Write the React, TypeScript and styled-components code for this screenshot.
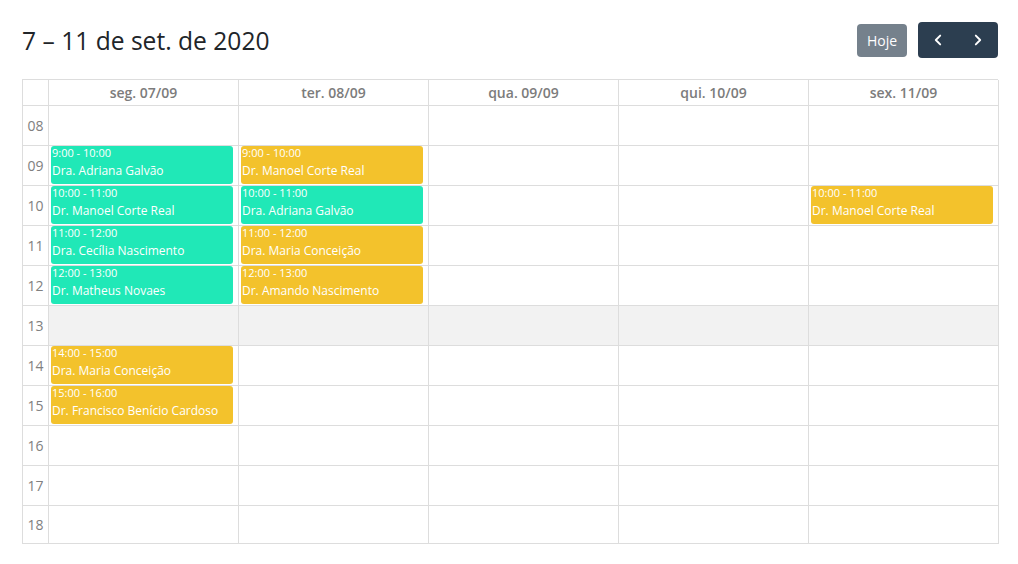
import styled, { createGlobalStyle } from "styled-components";

type Tone = "teal" | "gold";

type CalEvent = {
  day: number;
  hour: number;
  time: string;
  title: string;
  tone: Tone;
};

const days = ["seg. 07/09", "ter. 08/09", "qua. 09/09", "qui. 10/09", "sex. 11/09"];
const hours = [8, 9, 10, 11, 12, 13, 14, 15, 16, 17, 18];

const events: CalEvent[] = [
  { day: 0, hour: 9, time: "9:00 - 10:00", title: "Dra. Adriana Galvão", tone: "teal" },
  { day: 0, hour: 10, time: "10:00 - 11:00", title: "Dr. Manoel Corte Real", tone: "teal" },
  { day: 0, hour: 11, time: "11:00 - 12:00", title: "Dra. Cecília Nascimento", tone: "teal" },
  { day: 0, hour: 12, time: "12:00 - 13:00", title: "Dr. Matheus Novaes", tone: "teal" },
  { day: 0, hour: 14, time: "14:00 - 15:00", title: "Dra. Maria Conceição", tone: "gold" },
  { day: 0, hour: 15, time: "15:00 - 16:00", title: "Dr. Francisco Benício Cardoso", tone: "gold" },
  { day: 1, hour: 9, time: "9:00 - 10:00", title: "Dr. Manoel Corte Real", tone: "gold" },
  { day: 1, hour: 10, time: "10:00 - 11:00", title: "Dra. Adriana Galvão", tone: "teal" },
  { day: 1, hour: 11, time: "11:00 - 12:00", title: "Dra. Maria Conceição", tone: "gold" },
  { day: 1, hour: 12, time: "12:00 - 13:00", title: "Dr. Amando Nascimento", tone: "gold" },
  { day: 4, hour: 10, time: "10:00 - 11:00", title: "Dr. Manoel Corte Real", tone: "gold" },
];

const toneColors: Record<Tone, string> = {
  teal: "#20e8b7",
  gold: "#f3c22c",
};

const GlobalStyle = createGlobalStyle`
  html, body {
    margin: 0;
    padding: 0;
    background: #fff;
  }
  body {
    font-family: "Open Sans", "Noto Sans", sans-serif;
    color: #212529;
  }
`;

const Page = styled.div`
  padding: 22px 20px 0 22px;
`;

const Toolbar = styled.div`
  display: flex;
  align-items: center;
  justify-content: space-between;
  height: 36px;
  margin-bottom: 21px;
`;

const Title = styled.h2`
  margin: 0;
  font-size: 24.6px;
  font-weight: 400;
  color: #212529;
`;

const Actions = styled.div`
  display: flex;
  align-items: center;
  gap: 11px;
`;

const TodayButton = styled.button`
  height: 33px;
  width: 50px;
  border: none;
  border-radius: 4px;
  background: #2c3e50;
  opacity: 0.65;
  color: #fff;
  font-family: "Open Sans", sans-serif;
  font-size: 14px;
  padding: 0;
`;

const NavGroup = styled.div`
  display: flex;
  background: #2c3e50;
  border-radius: 4px;
  overflow: hidden;
`;

const NavButton = styled.button`
  width: 40px;
  height: 36px;
  border: none;
  background: transparent;
  color: #fff;
  display: flex;
  align-items: center;
  justify-content: center;
  padding: 0;
`;

const Grid = styled.div`
  display: grid;
  grid-template-columns: 26px repeat(5, 190px);
  border-top: 1px solid #ddd;
  border-left: 1px solid #ddd;
`;

const HeadCell = styled.div`
  height: 26px;
  box-sizing: border-box;
  border-right: 1px solid #ddd;
  border-bottom: 1px solid #ddd;
  display: flex;
  align-items: center;
  justify-content: center;
  font-size: 14px;
  font-weight: 600;
  color: #7c7c7c;
`;

const TimeCell = styled.div<{ $short?: boolean }>`
  height: ${(p) => (p.$short ? 38 : 40)}px;
  box-sizing: border-box;
  border-right: 1px solid #ddd;
  border-bottom: 1px solid #ddd;
  display: flex;
  align-items: center;
  justify-content: center;
  font-size: 14px;
  color: #808080;
`;

const SlotCell = styled.div<{ $short?: boolean; $off?: boolean }>`
  height: ${(p) => (p.$short ? 38 : 40)}px;
  box-sizing: border-box;
  border-right: 1px solid #ddd;
  border-bottom: 1px solid #ddd;
  background: ${(p) => (p.$off ? "#f2f2f2" : "#fff")};
  padding: 0 5px 1px 2px;
  display: flex;
`;

const EventCard = styled.div<{ $tone: Tone }>`
  flex: 1;
  background: ${(p) => toneColors[p.$tone]};
  border-radius: 3px;
  color: #fff;
  padding: 0 1px;
  overflow: hidden;
  white-space: nowrap;
`;

const EventTime = styled.div`
  font-size: 11px;
  line-height: 14px;
`;

const EventTitle = styled.div`
  font-size: 12px;
  line-height: 21px;
`;

const Chevron = ({ dir }: { dir: "left" | "right" }) => (
  <svg width="14" height="14" viewBox="0 0 16 16" fill="none">
    <path
      d={dir === "left" ? "M10.5 3 5.5 8l5 5" : "M5.5 3l5 5-5 5"}
      stroke="#fff"
      strokeWidth="2.2"
      strokeLinecap="round"
      strokeLinejoin="round"
    />
  </svg>
);

export default function App() {
  return (
    <Page>
      <GlobalStyle />
      <Toolbar>
        <Title>7 – 11 de set. de 2020</Title>
        <Actions>
          <TodayButton disabled>Hoje</TodayButton>
          <NavGroup>
            <NavButton aria-label="anterior">
              <Chevron dir="left" />
            </NavButton>
            <NavButton aria-label="próximo">
              <Chevron dir="right" />
            </NavButton>
          </NavGroup>
        </Actions>
      </Toolbar>
      <Grid>
        <HeadCell />
        {days.map((d) => (
          <HeadCell key={d}>{d}</HeadCell>
        ))}
        {hours.map((h, i) => {
          const short = i === hours.length - 1;
          return [
            <TimeCell key={`t${h}`} $short={short}>
              {String(h).padStart(2, "0")}
            </TimeCell>,
            ...days.map((_, di) => {
              const ev = events.find((e) => e.day === di && e.hour === h);
              return (
                <SlotCell key={`${h}-${di}`} $short={short} $off={h === 13}>
                  {ev && (
                    <EventCard $tone={ev.tone}>
                      <EventTime>{ev.time}</EventTime>
                      <EventTitle>{ev.title}</EventTitle>
                    </EventCard>
                  )}
                </SlotCell>
              );
            }),
          ];
        })}
      </Grid>
    </Page>
  );
}
